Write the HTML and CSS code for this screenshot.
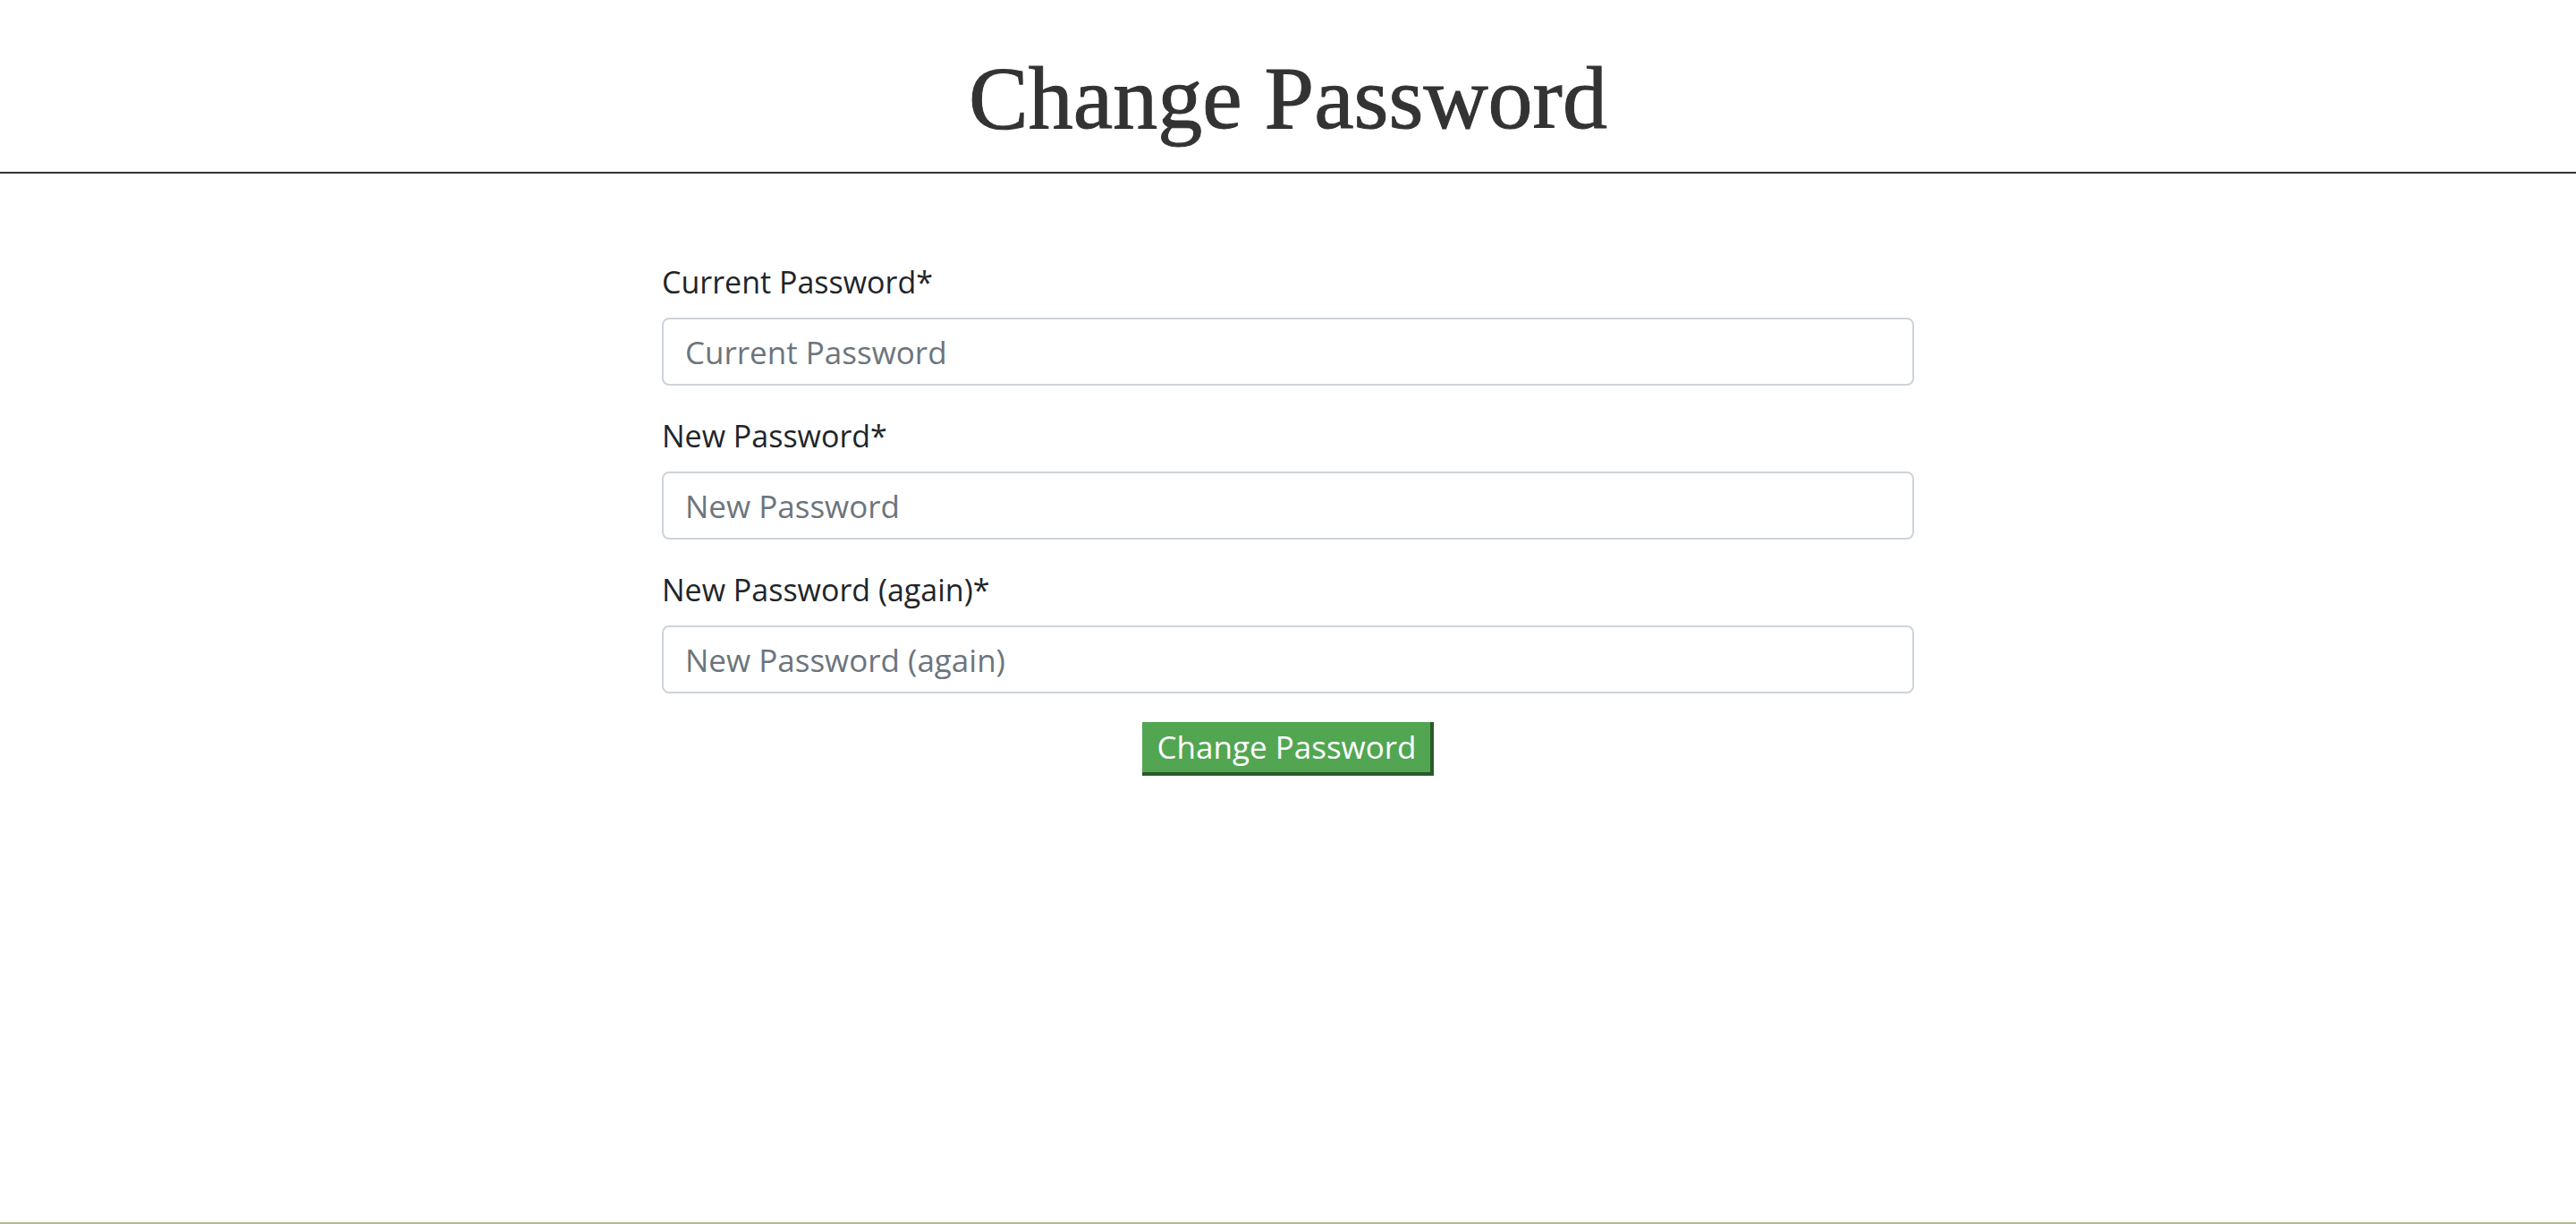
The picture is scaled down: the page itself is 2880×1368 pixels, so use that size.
FILE: index.html
```html
<!DOCTYPE html>
<html lang="en">
<head>
<meta charset="utf-8">
<title>Change Password</title>
<link rel="stylesheet" href="styles.css">
</head>
<body>
<header class="page-header">
  <h1 class="page-title">Change Password</h1>
</header>
<main class="content">
  <form class="pw-form">
    <div class="form-group">
      <label class="form-label" for="cur">Current Password*</label>
      <input class="form-control" id="cur" type="password" placeholder="Current Password">
    </div>
    <div class="form-group">
      <label class="form-label" for="new1">New Password*</label>
      <input class="form-control" id="new1" type="password" placeholder="New Password">
    </div>
    <div class="form-group">
      <label class="form-label" for="new2">New Password (again)*</label>
      <input class="form-control" id="new2" type="password" placeholder="New Password (again)">
    </div>
    <div class="actions">
      <button class="btn-submit" type="button">Change Password</button>
    </div>
  </form>
</main>
<footer class="page-footer"></footer>
</body>
</html>
```
FILE: styles.css
```css
html, body {
  margin: 0;
  padding: 0;
}
body {
  min-height: 100vh;
  display: flex;
  flex-direction: column;
  background: #fff;
  font-family: "Open Sans", "DejaVu Sans", sans-serif;
  color: #212529;
}
.page-header {
  border-bottom: 2px solid #333;
  text-align: center;
  padding: 50px 0 22px;
}
.page-title {
  margin: 0;
  font-family: "Liberation Serif", "DejaVu Serif", serif;
  font-weight: 400;
  font-size: 100px;
  line-height: 1.2;
  color: #333;
  -webkit-text-stroke: 1px #333;
}
.content {
  flex: 1;
  padding-top: 97px;
}
.pw-form {
  width: 1400px;
  margin: 0 auto;
}
.form-group {
  margin-bottom: 32px;
}
.form-label {
  display: block;
  font-size: 34px;
  font-weight: 500;
  line-height: 48px;
  margin-bottom: 16px;
  color: #212529;
}
.form-control {
  display: block;
  box-sizing: border-box;
  width: 100%;
  height: 76px;
  padding: 12px 24px;
  font-family: inherit;
  font-size: 35px;
  font-weight: 500;
  line-height: 48px;
  color: #495057;
  background: #fff;
  border: 2px solid #ced4da;
  border-radius: 8px;
}
.form-control::placeholder {
  color: #6c757d;
  opacity: 1;
}
.actions {
  display: flex;
  justify-content: center;
}
.btn-submit {
  font-family: inherit;
  font-size: 35px;
  font-weight: 500;
  line-height: 40px;
  color: #fff;
  background: #52a652;
  padding: 8px 16px 8px 17px;
  border-style: solid;
  border-width: 0 4px 4px 0;
  border-color: #52a652 #2b5a29 #2b5a29 #52a652;
  cursor: pointer;
}
.page-footer {
  border-top: 2px solid #b4bc8b;
}
```
